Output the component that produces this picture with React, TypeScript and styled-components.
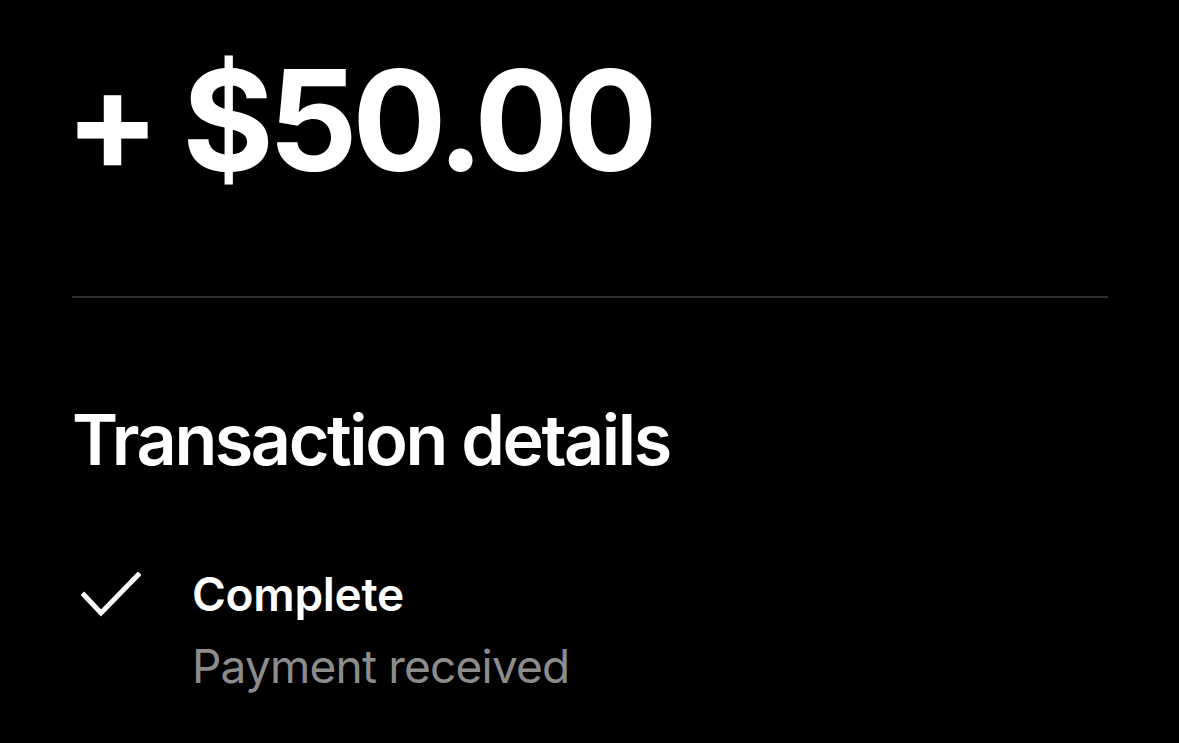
import styled, { createGlobalStyle } from "styled-components";

const GlobalStyle = createGlobalStyle`
  html, body {
    margin: 0;
    padding: 0;
    background: #000;
  }
  body {
    font-family: Inter, "Noto Sans", "Liberation Sans", sans-serif;
    color: #fff;
  }
`;

function CheckIcon() {
  return (
    <svg width="60" height="46" viewBox="0 0 60 46" fill="none">
      <path
        d="M3 23 L20 41 L57 3"
        stroke="#fff"
        strokeWidth="5"
        strokeLinecap="square"
        strokeLinejoin="miter"
      />
    </svg>
  );
}

function App() {
  return (
    <>
      <GlobalStyle />
      <Page>
        <Amount>+ $50.00</Amount>
        <Divider />
        <SectionTitle>Transaction details</SectionTitle>
        <StatusRow>
          <IconBox>
            <CheckIcon />
          </IconBox>
          <StatusText>
            <StatusLabel>Complete</StatusLabel>
            <StatusSub>Payment received</StatusSub>
          </StatusText>
        </StatusRow>
      </Page>
    </>
  );
}

const Page = styled.div`
  width: 1179px;
  height: 743px;
  box-sizing: border-box;
  padding: 40px 71px 0 72px;
  display: flex;
  flex-direction: column;
  overflow: hidden;
`;

const Amount = styled.div`
  margin-left: -7px;
  font-size: 140px;
  font-weight: 700;
  line-height: 160px;
  letter-spacing: -5.5px;
`;

const Divider = styled.div`
  margin-top: 96px;
  height: 2px;
  background: #2e2e2e;
`;

const SectionTitle = styled.h2`
  margin: 102px 0 0;
  font-size: 70px;
  font-weight: 600;
  line-height: 80px;
  letter-spacing: -2.4px;
`;

const StatusRow = styled.div`
  margin-top: 84px;
  display: flex;
  align-items: flex-start;
  gap: 51px;
`;

const IconBox = styled.div`
  width: 69px;
  display: flex;
  justify-content: flex-end;
  padding-top: 8px;
`;

const StatusText = styled.div`
  display: flex;
  flex-direction: column;
`;

const StatusLabel = styled.span`
  font-size: 46px;
  font-weight: 600;
  line-height: 60px;
  letter-spacing: -0.3px;
`;

const StatusSub = styled.span`
  margin-top: 12px;
  font-size: 46px;
  font-weight: 400;
  line-height: 60px;
  letter-spacing: -0.8px;
  color: #8c8c8c;
`;

export default App;
